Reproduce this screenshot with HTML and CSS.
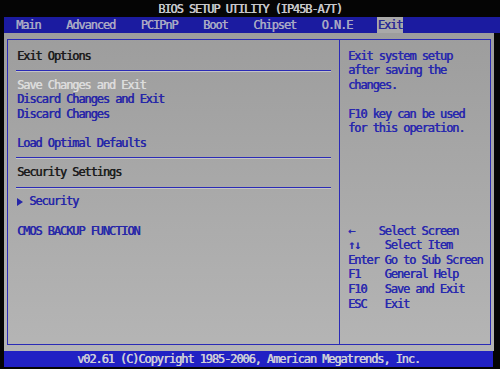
FILE: index.html
```html
<!DOCTYPE html>
<html>
<head>
<meta charset="utf-8">
<link rel="stylesheet" href="styles.css">
</head>
<body>
<div class="screen">
  <div class="title">BIOS SETUP UTILITY (IP45B-A7T)</div>
  <nav class="menubar">
    <span class="tab">Main</span>
    <span class="tab">Advanced</span>
    <span class="tab">PCIPnP</span>
    <span class="tab">Boot</span>
    <span class="tab">Chipset</span>
    <span class="tab">O.N.E</span>
    <span class="tab active">Exit</span>
  </nav>
  <div class="panel-area">
    <div class="frame">
      <section class="left">
        <div class="row hdr">Exit Options</div>
        <div class="sep"></div>
        <div class="row sel">Save Changes and Exit</div>
        <div class="row item">Discard Changes and Exit</div>
        <div class="row item">Discard Changes</div>
        <div class="row"></div>
        <div class="row item">Load Optimal Defaults</div>
        <div class="sep"></div>
        <div class="row hdr">Security Settings</div>
        <div class="sep"></div>
        <div class="row item"><span class="tri"><svg width="6" height="8" viewBox="0 0 6 8"><path d="M0 0 L6 4 L0 8 Z" fill="#2626a8"/></svg></span>Security</div>
        <div class="row"></div>
        <div class="row item">CMOS BACKUP FUNCTION</div>
      </section>
      <aside class="right">
        <div class="help">
          <div class="row">Exit system setup</div>
          <div class="row">after saving the</div>
          <div class="row">changes.</div>
          <div class="row"></div>
          <div class="row">F10 key can be used</div>
          <div class="row">for this operation.</div>
        </div>
        <div class="legend">
          <div class="row"><span class="key">←</span><span class="desc shift">Select Screen</span></div>
          <div class="row"><span class="key">↑↓</span><span class="desc">Select Item</span></div>
          <div class="row"><span class="key">Enter</span><span class="desc">Go to Sub Screen</span></div>
          <div class="row"><span class="key">F1</span><span class="desc">General Help</span></div>
          <div class="row"><span class="key">F10</span><span class="desc">Save and Exit</span></div>
          <div class="row"><span class="key">ESC</span><span class="desc">Exit</span></div>
        </div>
      </aside>
    </div>
  </div>
  <div class="footer">v02.61 (C)Copyright 1985-2006, American Megatrends, Inc.</div>
</div>
</body>
</html>
```

FILE: styles.css
```css
html, body {
  margin: 0;
  padding: 0;
  background: #050505;
}

.screen {
  width: 500px;
  height: 369px;
  overflow: hidden;
  font-family: "DejaVu Sans Mono", "Liberation Mono", monospace;
  font-size: 12px;
  letter-spacing: -1.1px;
  background: #050505;
  text-shadow: 0.4px 0 0 currentColor;
}

.title {
  height: 17px;
  box-sizing: border-box;
  padding-top: 2px;
  line-height: 15px;
  text-align: center;
  color: #c9c9cc;
}

.menubar {
  margin-left: 4px;
  height: 16px;
  display: flex;
  gap: 25.6px;
  padding-left: 12px;
  background: #1b1ba0;
  line-height: 16px;
}

.tab {
  color: #a9a9c4;
}

.tab.active {
  background: #a9a9a9;
  color: #2a2a96;
  margin-left: -1px;
  padding: 0 1px;
}

.panel-area {
  margin-left: 4px;
  width: 490px;
  height: 318px;
  box-sizing: border-box;
  padding: 6px 3px 6px 3px;
  background: linear-gradient(#9d9d9d, #b5b5b5);
}

.frame {
  height: 100%;
  box-sizing: border-box;
  border: 1px solid #2b2bb6;
  display: grid;
  grid-template-columns: 332px 1fr;
}

.row {
  height: 14.6px;
  line-height: 14.6px;
  white-space: pre;
}

.left {
  border-right: 1px solid #2b2bb6;
  padding: 8.5px 8px 0 8px;
}

.left .row {
  padding-left: 1px;
}

.hdr {
  color: #1c1c1c;
}

.sel {
  color: #dcdcdc;
}

.item {
  color: #2626a8;
}

.tri {
  display: inline-block;
  width: 12.2px;
}

.tri svg {
  display: inline-block;
  vertical-align: -1px;
}

.sep {
  height: 14.6px;
  display: flex;
  align-items: center;
}

.sep::before {
  content: "";
  flex: 1;
  height: 1px;
  background: #2b2bb6;
  box-shadow: 0 1px 0 #c4c4c4;
}

.right {
  padding: 8.5px 0 0 8px;
  color: #2828ae;
}

.legend {
  margin-top: 87.6px;
}

.legend .row {
  display: flex;
}

.key {
  width: 36.6px;
}

.desc.shift {
  margin-left: -6.1px;
}

.footer {
  margin-left: 4px;
  width: 489px;
  height: 16px;
  line-height: 16px;
  text-align: center;
  background: #2121c4;
  color: #cfcfd8;
}
```
